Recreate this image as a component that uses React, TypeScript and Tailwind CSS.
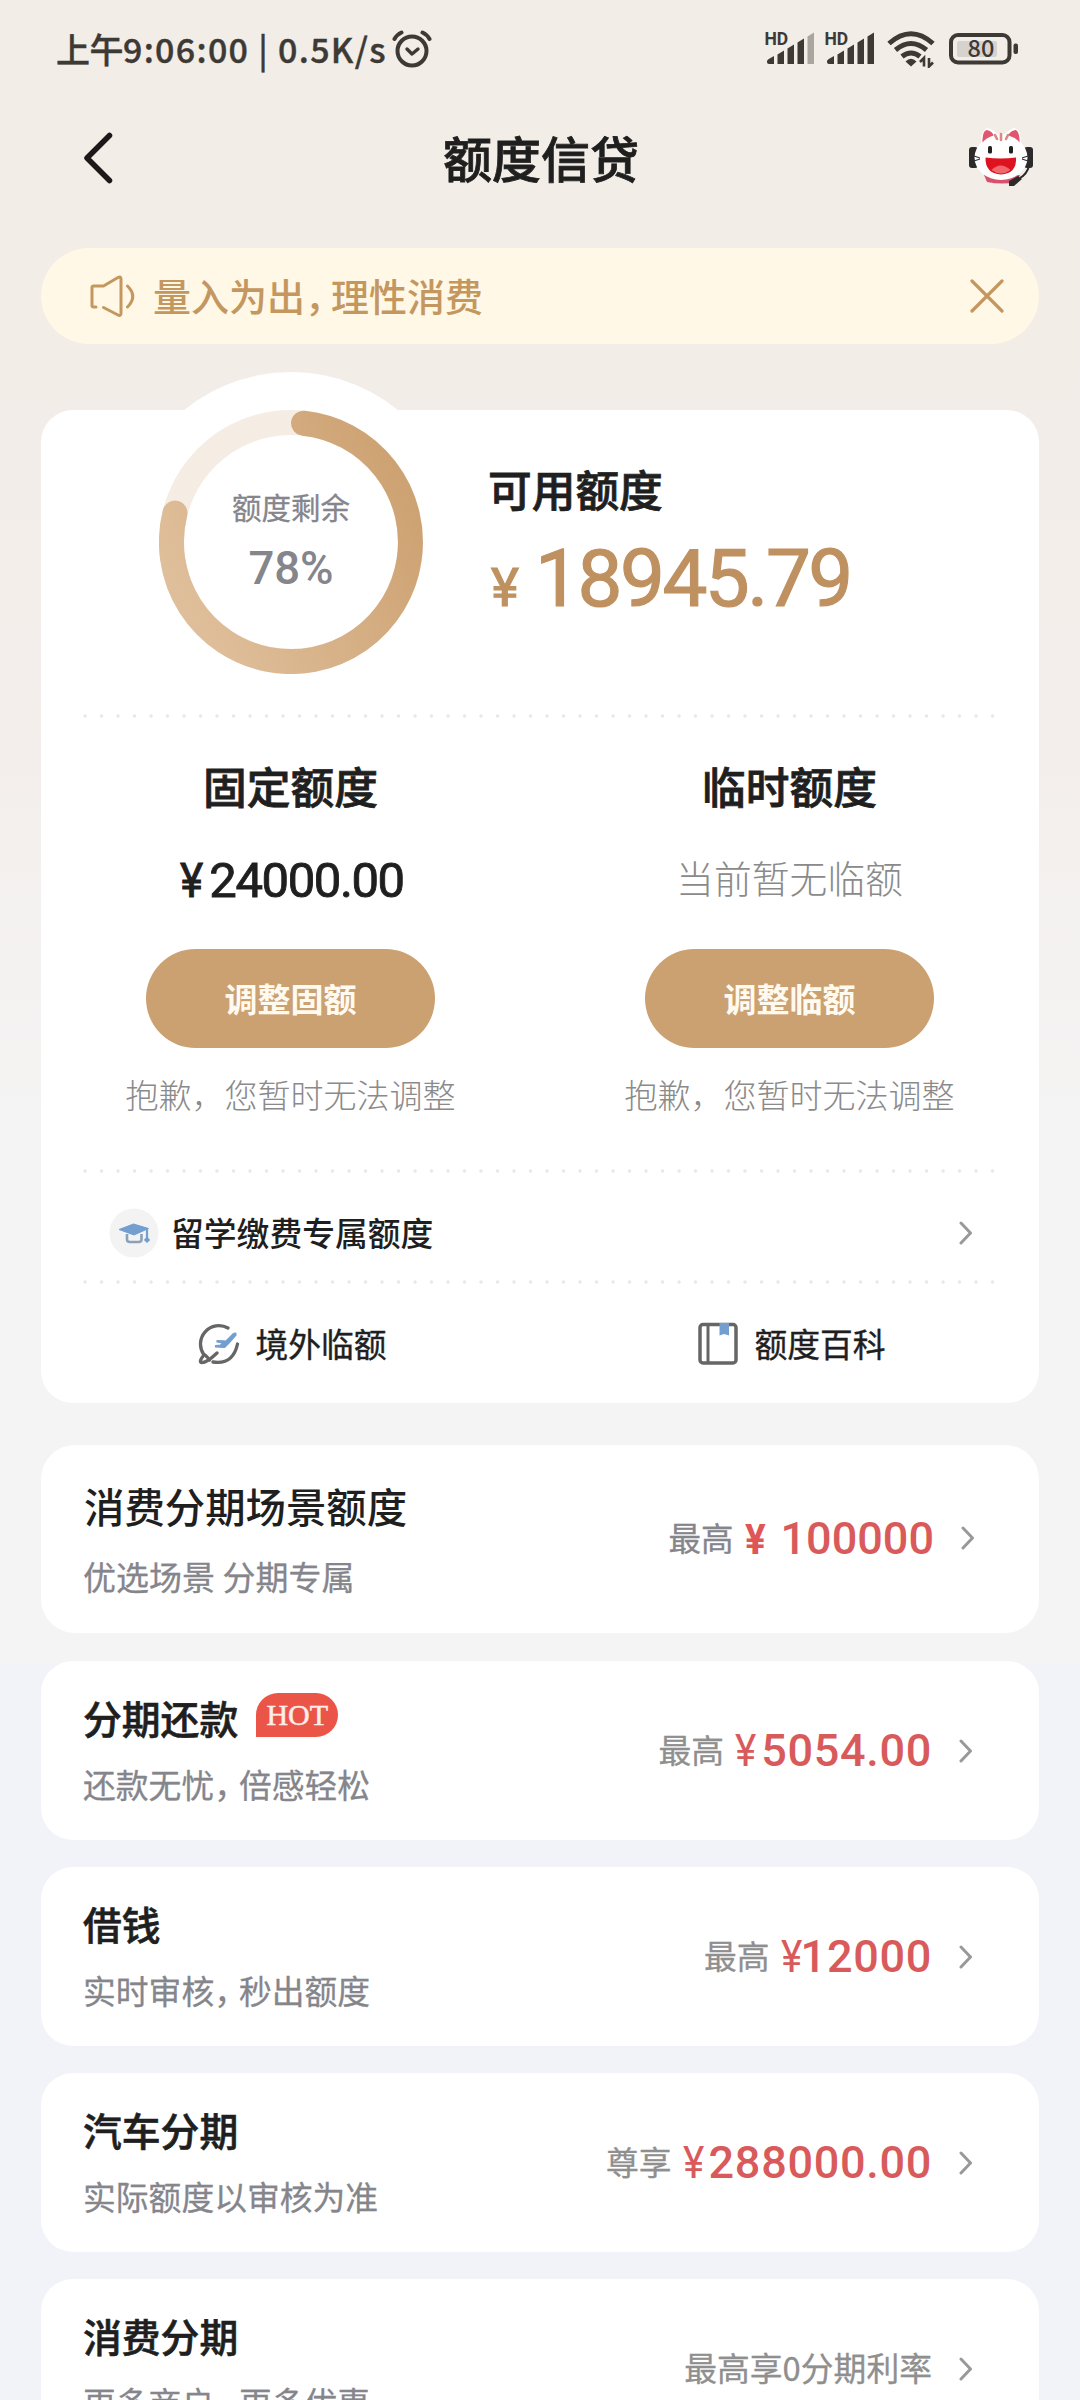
import React from 'react';
import { clsx } from 'clsx';

interface QuotaColumn {
  title: string;
  amount?: string;
  empty?: string;
  action: string;
}

interface ProductItem {
  title: string;
  desc: string;
  label: string;
  amount?: string;
  hot?: boolean;
}

const columns: QuotaColumn[] = [
  { title: '固定额度', amount: '24000.00', action: '调整固额' },
  { title: '临时额度', empty: '当前暂无临额', action: '调整临额' },
];

const products: ProductItem[] = [
  { title: '分期还款', desc: '还款无忧，倍感轻松', label: '最高', amount: '5054.00', hot: true },
  { title: '借钱', desc: '实时审核，秒出额度', label: '最高', amount: '12000' },
  { title: '汽车分期', desc: '实际额度以审核为准', label: '尊享', amount: '288000.00' },
  { title: '消费分期', desc: '更多商户，更多优惠', label: '最高享0分期利率' },
];

// Full-width comma with its trailing space trimmed
const Tight: React.FC<{ text: string; comma: string }> = ({ text, comma }) => {
  const [head, tail] = text.split('，');
  return (
    <>
      {head}
      {tail && <span className={comma}>，</span>}
      {tail}
    </>
  );
};

const Chevron: React.FC<{ className?: string }> = ({ className }) => (
  <svg viewBox="0 0 14 24" className={clsx('w-[14px] h-[24px] shrink-0', className)} fill="none" stroke="#999" strokeWidth="3" strokeLinecap="round" strokeLinejoin="round">
    <path d="M2 2l9.500 10L2 22" />
  </svg>
);

const Dots: React.FC = () => (
  <svg className="block mx-[41px] w-[916px] h-1" viewBox="0 0 916 4">
    <path d="M3 2H914" stroke="#e8e8e8" strokeWidth="3.400" strokeLinecap="round" strokeDasharray="0.1 16.4" />
  </svg>
);

const Signal: React.FC<{ weak?: boolean }> = ({ weak }) => (
  <svg viewBox="0 0 52 36" className="w-[52px] h-[36px] overflow-visible" fill="#3d3935">
    <text x="-0.5" y="13.500" fontSize="17.500" fontWeight="700" fontFamily="Roboto, sans-serif">HD</text>
    <path d="M2 30q0-1.500 7-5v8H4q-2 0-2-2z" />
    <path d="M12.500 23.500l6.500-4V33h-6.500z" />
    <path d="M22.500 17.500l6.500-4V33h-6.500z" />
    <path d="M32.500 11.500l6.500-4V33h-6.500z" />
    <path d="M42.500 5.500l6.500-4V33h-6.500z" opacity={weak ? 0.4 : 1} />
  </svg>
);

const StatusBar: React.FC = () => (
  <div className="flex items-center h-[98px] pl-[56px] pr-[61px] text-[#3d3935]">
    <div className="flex items-center h-[50px] text-[34px] font-medium whitespace-nowrap [-webkit-text-stroke:0.4px_#3d3935]">
      <span className="-mt-[2px] tracking-[-0.5px]">上午</span>
      <span className="-mt-[2px] tracking-[1.3px]">9:06:00 | 0.5K/s</span>
    </div>
    <svg viewBox="0 0 40 38" className="w-[40px] h-[38px] ml-[5px]" fill="none" stroke="#3d3935" strokeWidth="4" strokeLinecap="round" strokeLinejoin="round">
      <circle cx="20" cy="21" r="14.500" />
      <path d="M15 19l5 5 6-5" strokeWidth="3.400" />
      <path d="M2.500 9Q5 4.500 9.500 2.500M30.500 2.500Q35 4.500 37.500 9" />
    </svg>
    <div className="flex items-center ml-auto">
      <Signal weak />
      <div className="w-[8px]" />
      <Signal />
      <svg viewBox="0 0 48 38" className="w-[48px] h-[38px] ml-[10px]" fill="none" stroke="#3d3935" strokeWidth="5">
        <path d="M2 13.500Q24 -6 46 13.500" />
        <path d="M8.500 20Q24 7 39.500 20" />
        <path d="M15 26.500Q24 19.500 33 26.500" />
        <path d="M18.500 31.500Q24 26 29.500 31.500L24 36.500z" fill="#3d3935" stroke="none" />
        <path d="M37 36.500V28l-4 4M42 28v8.500l4-4" strokeWidth="2.600" />
      </svg>
      <svg viewBox="0 0 70 32" className="w-[70px] h-[32px] ml-[14px] overflow-visible" fill="none">
        <rect x="2" y="2" width="58.500" height="27.500" rx="7" stroke="#3d3935" strokeWidth="4" />
        <rect x="8" y="8" width="40" height="16" rx="2" fill="#d6d2ce" />
        <rect x="64.500" y="10.500" width="4.500" height="10.500" rx="2" fill="#3d3935" />
        <text x="32" y="24" textAnchor="middle" fontSize="23.500" fontWeight="500" fontFamily="'Noto Sans CJK SC', sans-serif" fill="#3d3935">80</text>
      </svg>
    </div>
  </div>
);

const Mascot: React.FC = () => (
  <svg viewBox="0 0 64 60" className="w-[64px] h-[60px] -mt-[4px]">
    <path d="M15 48h36l-3 7q-15 3-30 0z" fill="#d9506c" />
    <rect x="0" y="20" width="9" height="21" rx="3" fill="#2d2a2b" />
    <rect x="55" y="20" width="9" height="21" rx="3" fill="#2d2a2b" />
    <path d="M12 20Q11 4 18 1q6 1 10 6h8q5-5 10-6 7 3 6 19z" fill="#fff" />
    <ellipse cx="32" cy="30.500" rx="26.500" ry="22.500" fill="#fff" />
    <path d="M13.500 12Q14 4 17.500 3q6 1 7 5.500-7 2-11 7zM50.500 12Q50 4 46.500 3q-6 1-7 5.500 7 2 11 7z" fill="#e0566e" />
    <path d="M32 7v6M26 8l2 4M39 8l-2 4" stroke="#d98a86" strokeWidth="2.600" strokeLinecap="round" />
    <rect x="19" y="19" width="4" height="7.500" rx="1.500" fill="#222" />
    <rect x="40" y="19" width="4" height="7.500" rx="1.500" fill="#222" />
    <path d="M16.500 30.500q15 2 30.500 0 1 16-15 17-16-1-15.500-17z" fill="#dd1420" />
    <path d="M22.500 43q9-9 19 0-9.500 7-19 0z" fill="#f0686c" />
    <path d="M5 29l6 2M5 34l6-2M59 29l-6 2M59 34l-6-2" stroke="#333" strokeWidth="1.200" />
    <path d="M60 39q-2 8-9 12" fill="none" stroke="#2d2a2b" strokeWidth="2" />
    <path d="M40 54l9-5 4 3-8 7h-5z" fill="#2d2a2b" />
  </svg>
);

const Header: React.FC = () => (
  <div className="flex items-center justify-between h-[122px] pl-[83px] pr-[47px]">
    <svg viewBox="0 0 30 52" className="w-[30px] h-[52px] -mt-[3px]" fill="none" stroke="#1d191a" strokeWidth="5.500" strokeLinecap="round" strokeLinejoin="round">
      <path d="M26.500 3.500L4 26l22.500 22.500" />
    </svg>
    <h1 className="text-[49px] leading-[56px] font-medium text-[#1f1f1f] -mt-[5px] [-webkit-text-stroke:0.8px_#1f1f1f]">额度信贷</h1>
    <Mascot />
  </div>
);

const Notice: React.FC = () => (
  <div className="flex items-center h-[96px] mx-[41px] mt-[28px] pl-[48px] pr-[35px] rounded-full bg-[#fff8e7] text-[#c4975f]">
    <svg viewBox="0 0 46 44" className="w-[46px] h-[44px]" fill="none" stroke="currentColor" strokeWidth="3" strokeLinecap="round" strokeLinejoin="round">
      <path d="M7 33H4.500Q3 33 3 31.500V13.500Q3 12 4.500 12H14.500L29 3.500Q32 2 32 5V39Q32 42.500 29 41L14.500 33.500" />
      <path d="M38.500 12q10.500 10.500 0 21" />
    </svg>
    <p className="ml-[18px] -mt-[2px] text-[38px] leading-[46px] font-medium">
      <Tight text="量入为出，理性消费" comma="tracking-[-12px]" />
    </p>
    <svg viewBox="0 0 34 34" className="w-[34px] h-[34px] ml-auto" fill="none" stroke="currentColor" strokeWidth="3.200" strokeLinecap="round">
      <path d="M2 2l30 30M32 2L2 32" />
    </svg>
  </div>
);

const Ring: React.FC = () => (
  <div className="relative w-[264px] h-[264px] shrink-0">
    <svg viewBox="0 0 264 264" className="w-full h-full" fill="none" strokeWidth="25">
      <defs>
        <linearGradient id="ring" x1="1" y1="0.200" x2="0" y2="0.700">
          <stop offset="0" stopColor="#cda171" />
          <stop offset="1" stopColor="#dfbf9b" />
        </linearGradient>
      </defs>
      <circle cx="132" cy="132" r="119.500" stroke="#f5ece4" />
      <path d="M144.500 13.200A119.500 119.500 0 1 1 16 103.100" stroke="url(#ring)" strokeLinecap="round" />
    </svg>
    <div className="absolute inset-0 flex flex-col items-center pt-[74px] text-[#85858c]">
      <span className="text-[29.5px] leading-[44px] [-webkit-text-stroke:0.3px_#85858c]">额度剩余</span>
      <span className="font-[Roboto] font-medium text-[45.5px] leading-[44px] mt-[19px]">78%</span>
    </div>
  </div>
);

const QuotaCard: React.FC = () => (
  <section className="relative mx-[41px] mt-[66px] h-[993px] rounded-[32px] bg-white text-[#1f1f1f]">
    <div className="absolute left-[80px] -top-[38px] w-[340px] h-[340px] rounded-full bg-white" />
    <div className="relative flex h-[304px] pl-[118px]">
      <Ring />
      <div className="ml-[65px] pt-[52px]">
        <h2 className="text-[43.7px] leading-[52px] font-medium [-webkit-text-stroke:0.8px_#1f1f1f]">可用额度</h2>
        <div className="flex items-baseline mt-[25px] font-[Roboto] leading-[80px] text-[#bf9160] [-webkit-text-stroke:1.2px_#bf9160]">
          <span className="text-[53px] leading-[80px] ml-[3px] w-[44px]">¥</span>
          <span className="text-[80px] tracking-[-2.5px]">18945.79</span>
        </div>
      </div>
    </div>
    <Dots />
    <div className="flex h-[451px]">
      {columns.map((col) => (
        <div key={col.title} className="flex-1 flex flex-col items-center">
          <h3 className="mt-[41px] text-[43.7px] leading-[52px] font-medium [-webkit-text-stroke:0.8px_#1f1f1f]">{col.title}</h3>
          <div className="flex items-center mt-[42px] h-[52px]">
            {col.amount ? (
              <span className="ml-[3px] mt-[3px] font-[Roboto] text-[49px] leading-[52px] tracking-[-1.4px] [-webkit-text-stroke:0.9px_#1f1f1f]">
                <span className="inline-block w-[29px] scale-x-90 origin-left">¥</span>
                {col.amount}
              </span>
            ) : (
              <span className="text-[37.8px] leading-[52px] font-light text-[#8a8a8a] -mt-[4px]">{col.empty}</span>
            )}
          </div>
          <button className="mt-[44px] w-[289px] h-[99px] shrink-0 rounded-full bg-[#cba172] text-[33px] leading-[44px] pb-[2px] font-bold text-[#fffaf0]">
            {col.action}
          </button>
          <p className="mt-[24px] text-[33px] leading-[44px] font-light text-[#8a8a8a]">抱歉，您暂时无法调整</p>
        </div>
      ))}
    </div>
    <Dots />
    <div className="flex items-center h-[107px] pl-[68px] pr-[66px] pb-[1px] pt-[13px]">
      <svg viewBox="0 0 50 50" className="w-[50px] h-[50px]" fill="none">
        <circle cx="25" cy="25" r="24.500" fill="#f3f3f3" />
        <path d="M18 26v5.500q0 2.500 3 2.500h8.500q3 0 3-2.500V26" stroke="#8ca0b8" strokeWidth="2.600" />
        <path d="M10 21.500L24.500 16 39.500 20.500 25 27z" fill="#729fd0" stroke="#729fd0" strokeLinejoin="round" />
        <path d="M38 21v10" stroke="#729fd0" strokeWidth="2.200" />
        <path d="M38 28.500l3.200 3.500-3.200 3-3.200-3z" fill="#729fd0" />
      </svg>
      <span className="ml-[12px] -mt-[2px] text-[32.8px] leading-[44px] font-medium">留学缴费专属额度</span>
      <Chevron className="ml-auto" />
    </div>
    <Dots />
    <div className="flex h-[119px]">
      <div className="flex-1 flex items-center justify-center pl-[4px]">
        <svg viewBox="0 0 42 42" className="w-[42px] h-[42px]" fill="none" stroke="#666" strokeWidth="3.300" strokeLinecap="round" strokeLinejoin="round">
          <path d="M30 5A18.500 18.500 0 0 0 6 32Q1 38 3 39.500q5 1 16-9.500M15 39Q35 42 39.500 21" />
          <path d="M7 32q3 2.500 4.500 5" />
          <path d="M19 17.500l9 .5 7.500-7.500q3-1.500 2.500 1.500l-7 8-4.500 4.500-9-.5v-1.500l5-.5 2-2-5.500-1z" fill="#729fd0" stroke="#729fd0" strokeWidth="1.200" />
        </svg>
        <span className="ml-[15px] -mt-[2px] text-[32.8px] leading-[44px] [-webkit-text-stroke:0.4px_#1f1f1f]">境外临额</span>
      </div>
      <div className="flex-1 flex items-center justify-center pl-[4px]">
        <svg viewBox="0 0 42 44" className="w-[42px] h-[44px]" fill="none" stroke="#666" strokeWidth="3.500">
          <rect x="3" y="2.500" width="36" height="38.500" rx="3" />
          <path d="M11 3v38" strokeWidth="3" />
          <path d="M22.500 1h9.500v12.500l-4.750-1.500-4.750 1.500z" fill="#729fd0" stroke="none" />
        </svg>
        <span className="ml-[15px] -mt-[2px] text-[32.8px] leading-[44px] [-webkit-text-stroke:0.4px_#1f1f1f]">额度百科</span>
      </div>
    </div>
  </section>
);

const SceneCard: React.FC = () => (
  <section className="flex items-center mx-[41px] mt-[42px] h-[188px] pl-[42px] pr-[64px] rounded-[34px] bg-white">
    <div className="pt-[3px]">
      <h3 className="text-[40.4px] leading-[50px] font-medium text-[#1f1f1f] ml-[1px]">消费分期场景额度</h3>
      <p className="mt-[21px] text-[33px] leading-[48px] text-[#85858c] [-webkit-text-stroke:0.3px_#85858c]">优选场景 分期专属</p>
    </div>
    <div className="flex items-center ml-auto">
      <span className="text-[32.5px] leading-[48px] text-[#85858c] -mt-[4px] [-webkit-text-stroke:0.3px_#85858c]">最高</span>
      <span className="ml-[11px] font-[Roboto] font-bold text-[43px] leading-[48px] text-[#e05656] scale-x-90 w-[36px] origin-left">¥</span>
      <span className="font-[Roboto] font-medium text-[45px] leading-[48px] text-[#d95a5a]">100000</span>
      <Chevron className="ml-[27px] -mt-[3px]" />
    </div>
  </section>
);

const ProductCard: React.FC<{ item: ProductItem }> = ({ item }) => (
  <section className="flex items-center mx-[41px] h-[179px] shrink-0 pl-[42px] pr-[66px] rounded-[32px] bg-white">
    <div>
      <div className="flex items-center h-[50px]">
        <h3 className="text-[38.8px] leading-[50px] -mt-[8px] font-medium text-[#1f1f1f] [-webkit-text-stroke:0.6px_#1f1f1f]">{item.title}</h3>
        {item.hot && (
          <span className="ml-[18px] -mt-[11px] w-[82px] h-[44px] rounded-full rounded-bl-none bg-[#eb5548] text-center font-['Liberation_Serif'] text-[30px] leading-[43px] text-[#fdeeea] [-webkit-text-stroke:0.5px_#fdeeea]">
            HOT
          </span>
        )}
      </div>
      <p className="mt-[15px] -mb-[1px] text-[32.8px] leading-[46px] text-[#85858c] [-webkit-text-stroke:0.3px_#85858c]">
        <Tight text={item.desc} comma="tracking-[-8px]" />
      </p>
    </div>
    <div className="flex items-center ml-auto">
      <span className="text-[32.8px] leading-[48px] text-[#8f8f8f] -mt-[4px] [-webkit-text-stroke:0.3px_#8f8f8f]">{item.label}</span>
      {item.amount && (
        <span className="ml-[11px] font-[Roboto] font-medium text-[45px] leading-[48px] tracking-[0.7px] text-[#d95a5a]">
          {/* a leading 1 carries wide side bearings, pull it towards the sign */}
          <span className={clsx('inline-block scale-x-90 origin-left font-normal', item.amount.startsWith('1') ? 'w-[20px]' : 'w-[26px]')}>¥</span>
          {item.amount}
        </span>
      )}
      <Chevron className="ml-[27px]" />
    </div>
  </section>
);

const App: React.FC = () => (
  <div className="w-[1080px] h-[2400px] overflow-hidden font-['Noto_Sans_CJK_SC',sans-serif] bg-[linear-gradient(to_bottom,#f2ede6_0px,#f2ede8_420px,#f3eeeb_750px,#f4f2f1_950px,#f4f4f4_1170px,#f4f4f4_1664px,#f2f3f8_1664px)]">
    <StatusBar />
    <Header />
    <Notice />
    <QuotaCard />
    <SceneCard />
    <div className="flex flex-col gap-[27px] mt-[28px]">
      {products.map((item) => (
        <ProductCard key={item.title} item={item} />
      ))}
    </div>
  </div>
);

export default App;
